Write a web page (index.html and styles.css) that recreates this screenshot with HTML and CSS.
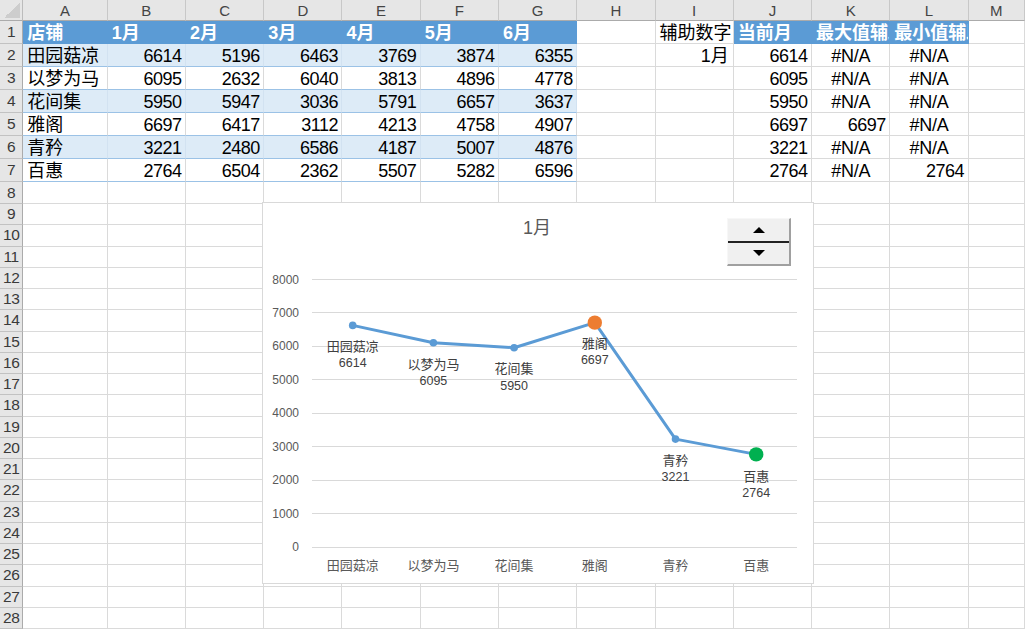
FILE: index.html
```html
<!DOCTYPE html>
<html lang="zh-CN">
<head>
<meta charset="utf-8">
<title>Sheet</title>
<link rel="stylesheet" href="styles.css">
</head>
<body>
<div class="sheet">
  <div class="row hdr">
    <div class="corner"></div>
    <div class="ch">A</div><div class="ch">B</div><div class="ch">C</div><div class="ch">D</div><div class="ch">E</div><div class="ch">F</div><div class="ch">G</div><div class="ch">H</div><div class="ch">I</div><div class="ch">J</div><div class="ch">K</div><div class="ch">L</div><div class="ch">M</div>
  </div>

  <div class="row tall">
    <div class="rh">1</div>
    <div class="c th">店铺</div><div class="c th">1月</div><div class="c th">2月</div><div class="c th">3月</div><div class="c th">4月</div><div class="c th">5月</div><div class="c th">6月</div>
    <div class="c"></div>
    <div class="c">辅助数字</div>
    <div class="c th">当前月</div><div class="c th">最大值辅助</div><div class="c th">最小值辅助</div>
    <div class="c"></div>
  </div>

  <div class="row tall band">
    <div class="rh">2</div>
    <div class="c tb">田园菇凉</div><div class="c tb n">6614</div><div class="c tb n">5196</div><div class="c tb n">6463</div><div class="c tb n">3769</div><div class="c tb n">3874</div><div class="c tb n">6355</div>
    <div class="c"></div><div class="c r">1月</div><div class="c n">6614</div><div class="c ctr">#N/A</div><div class="c ctr">#N/A</div><div class="c"></div>
  </div>

  <div class="row tall">
    <div class="rh">3</div>
    <div class="c tb">以梦为马</div><div class="c tb n">6095</div><div class="c tb n">2632</div><div class="c tb n">6040</div><div class="c tb n">3813</div><div class="c tb n">4896</div><div class="c tb n">4778</div>
    <div class="c"></div><div class="c"></div><div class="c n">6095</div><div class="c ctr">#N/A</div><div class="c ctr">#N/A</div><div class="c"></div>
  </div>

  <div class="row tall band">
    <div class="rh">4</div>
    <div class="c tb">花间集</div><div class="c tb n">5950</div><div class="c tb n">5947</div><div class="c tb n">3036</div><div class="c tb n">5791</div><div class="c tb n">6657</div><div class="c tb n">3637</div>
    <div class="c"></div><div class="c"></div><div class="c n">5950</div><div class="c ctr">#N/A</div><div class="c ctr">#N/A</div><div class="c"></div>
  </div>

  <div class="row tall">
    <div class="rh">5</div>
    <div class="c tb">雅阁</div><div class="c tb n">6697</div><div class="c tb n">6417</div><div class="c tb n">3112</div><div class="c tb n">4213</div><div class="c tb n">4758</div><div class="c tb n">4907</div>
    <div class="c"></div><div class="c"></div><div class="c n">6697</div><div class="c n">6697</div><div class="c ctr">#N/A</div><div class="c"></div>
  </div>

  <div class="row tall band">
    <div class="rh">6</div>
    <div class="c tb">青矜</div><div class="c tb n">3221</div><div class="c tb n">2480</div><div class="c tb n">6586</div><div class="c tb n">4187</div><div class="c tb n">5007</div><div class="c tb n">4876</div>
    <div class="c"></div><div class="c"></div><div class="c n">3221</div><div class="c ctr">#N/A</div><div class="c ctr">#N/A</div><div class="c"></div>
  </div>

  <div class="row tall">
    <div class="rh">7</div>
    <div class="c tb">百惠</div><div class="c tb n">2764</div><div class="c tb n">6504</div><div class="c tb n">2362</div><div class="c tb n">5507</div><div class="c tb n">5282</div><div class="c tb n">6596</div>
    <div class="c"></div><div class="c"></div><div class="c n">2764</div><div class="c ctr">#N/A</div><div class="c n">2764</div><div class="c"></div>
  </div>

  <div class="row r8"><div class="rh">8</div><div class="c"></div><div class="c"></div><div class="c"></div><div class="c"></div><div class="c"></div><div class="c"></div><div class="c"></div><div class="c"></div><div class="c"></div><div class="c"></div><div class="c"></div><div class="c"></div><div class="c"></div></div>
  <div class="row"><div class="rh">9</div><div class="c"></div><div class="c"></div><div class="c"></div><div class="c"></div><div class="c"></div><div class="c"></div><div class="c"></div><div class="c"></div><div class="c"></div><div class="c"></div><div class="c"></div><div class="c"></div><div class="c"></div></div>
  <div class="row"><div class="rh">10</div><div class="c"></div><div class="c"></div><div class="c"></div><div class="c"></div><div class="c"></div><div class="c"></div><div class="c"></div><div class="c"></div><div class="c"></div><div class="c"></div><div class="c"></div><div class="c"></div><div class="c"></div></div>
  <div class="row"><div class="rh">11</div><div class="c"></div><div class="c"></div><div class="c"></div><div class="c"></div><div class="c"></div><div class="c"></div><div class="c"></div><div class="c"></div><div class="c"></div><div class="c"></div><div class="c"></div><div class="c"></div><div class="c"></div></div>
  <div class="row"><div class="rh">12</div><div class="c"></div><div class="c"></div><div class="c"></div><div class="c"></div><div class="c"></div><div class="c"></div><div class="c"></div><div class="c"></div><div class="c"></div><div class="c"></div><div class="c"></div><div class="c"></div><div class="c"></div></div>
  <div class="row"><div class="rh">13</div><div class="c"></div><div class="c"></div><div class="c"></div><div class="c"></div><div class="c"></div><div class="c"></div><div class="c"></div><div class="c"></div><div class="c"></div><div class="c"></div><div class="c"></div><div class="c"></div><div class="c"></div></div>
  <div class="row"><div class="rh">14</div><div class="c"></div><div class="c"></div><div class="c"></div><div class="c"></div><div class="c"></div><div class="c"></div><div class="c"></div><div class="c"></div><div class="c"></div><div class="c"></div><div class="c"></div><div class="c"></div><div class="c"></div></div>
  <div class="row"><div class="rh">15</div><div class="c"></div><div class="c"></div><div class="c"></div><div class="c"></div><div class="c"></div><div class="c"></div><div class="c"></div><div class="c"></div><div class="c"></div><div class="c"></div><div class="c"></div><div class="c"></div><div class="c"></div></div>
  <div class="row"><div class="rh">16</div><div class="c"></div><div class="c"></div><div class="c"></div><div class="c"></div><div class="c"></div><div class="c"></div><div class="c"></div><div class="c"></div><div class="c"></div><div class="c"></div><div class="c"></div><div class="c"></div><div class="c"></div></div>
  <div class="row"><div class="rh">17</div><div class="c"></div><div class="c"></div><div class="c"></div><div class="c"></div><div class="c"></div><div class="c"></div><div class="c"></div><div class="c"></div><div class="c"></div><div class="c"></div><div class="c"></div><div class="c"></div><div class="c"></div></div>
  <div class="row"><div class="rh">18</div><div class="c"></div><div class="c"></div><div class="c"></div><div class="c"></div><div class="c"></div><div class="c"></div><div class="c"></div><div class="c"></div><div class="c"></div><div class="c"></div><div class="c"></div><div class="c"></div><div class="c"></div></div>
  <div class="row"><div class="rh">19</div><div class="c"></div><div class="c"></div><div class="c"></div><div class="c"></div><div class="c"></div><div class="c"></div><div class="c"></div><div class="c"></div><div class="c"></div><div class="c"></div><div class="c"></div><div class="c"></div><div class="c"></div></div>
  <div class="row"><div class="rh">20</div><div class="c"></div><div class="c"></div><div class="c"></div><div class="c"></div><div class="c"></div><div class="c"></div><div class="c"></div><div class="c"></div><div class="c"></div><div class="c"></div><div class="c"></div><div class="c"></div><div class="c"></div></div>
  <div class="row"><div class="rh">21</div><div class="c"></div><div class="c"></div><div class="c"></div><div class="c"></div><div class="c"></div><div class="c"></div><div class="c"></div><div class="c"></div><div class="c"></div><div class="c"></div><div class="c"></div><div class="c"></div><div class="c"></div></div>
  <div class="row"><div class="rh">22</div><div class="c"></div><div class="c"></div><div class="c"></div><div class="c"></div><div class="c"></div><div class="c"></div><div class="c"></div><div class="c"></div><div class="c"></div><div class="c"></div><div class="c"></div><div class="c"></div><div class="c"></div></div>
  <div class="row"><div class="rh">23</div><div class="c"></div><div class="c"></div><div class="c"></div><div class="c"></div><div class="c"></div><div class="c"></div><div class="c"></div><div class="c"></div><div class="c"></div><div class="c"></div><div class="c"></div><div class="c"></div><div class="c"></div></div>
  <div class="row"><div class="rh">24</div><div class="c"></div><div class="c"></div><div class="c"></div><div class="c"></div><div class="c"></div><div class="c"></div><div class="c"></div><div class="c"></div><div class="c"></div><div class="c"></div><div class="c"></div><div class="c"></div><div class="c"></div></div>
  <div class="row"><div class="rh">25</div><div class="c"></div><div class="c"></div><div class="c"></div><div class="c"></div><div class="c"></div><div class="c"></div><div class="c"></div><div class="c"></div><div class="c"></div><div class="c"></div><div class="c"></div><div class="c"></div><div class="c"></div></div>
  <div class="row"><div class="rh">26</div><div class="c"></div><div class="c"></div><div class="c"></div><div class="c"></div><div class="c"></div><div class="c"></div><div class="c"></div><div class="c"></div><div class="c"></div><div class="c"></div><div class="c"></div><div class="c"></div><div class="c"></div></div>
  <div class="row"><div class="rh">27</div><div class="c"></div><div class="c"></div><div class="c"></div><div class="c"></div><div class="c"></div><div class="c"></div><div class="c"></div><div class="c"></div><div class="c"></div><div class="c"></div><div class="c"></div><div class="c"></div><div class="c"></div></div>
  <div class="row"><div class="rh">28</div><div class="c"></div><div class="c"></div><div class="c"></div><div class="c"></div><div class="c"></div><div class="c"></div><div class="c"></div><div class="c"></div><div class="c"></div><div class="c"></div><div class="c"></div><div class="c"></div><div class="c"></div></div>

  <div class="chart">
    <svg class="plot" width="550" height="380" viewBox="0 0 550 380" xmlns="http://www.w3.org/2000/svg">
      <text class="title" x="274" y="25">1月</text>
      <g class="grid">
        <line x1="49" y1="76.5" x2="534" y2="76.5"/>
        <line x1="49" y1="109.5" x2="534" y2="109.5"/>
        <line x1="49" y1="143.5" x2="534" y2="143.5"/>
        <line x1="49" y1="176.5" x2="534" y2="176.5"/>
        <line x1="49" y1="210.5" x2="534" y2="210.5"/>
        <line x1="49" y1="243.5" x2="534" y2="243.5"/>
        <line x1="49" y1="277.5" x2="534" y2="277.5"/>
        <line x1="49" y1="310.5" x2="534" y2="310.5"/>
        <line x1="49" y1="344.5" x2="534" y2="344.5"/>
      </g>
      <g class="yax">
        <text x="36" y="76.5">8000</text>
        <text x="36" y="109.5">7000</text>
        <text x="36" y="143">6000</text>
        <text x="36" y="176.5">5000</text>
        <text x="36" y="210">4000</text>
        <text x="36" y="243.5">3000</text>
        <text x="36" y="277">2000</text>
        <text x="36" y="310.5">1000</text>
        <text x="36" y="344">0</text>
      </g>
      <g class="xax">
        <text x="89.7" y="361.5">田园菇凉</text>
        <text x="170.4" y="361.5">以梦为马</text>
        <text x="251.1" y="361.5">花间集</text>
        <text x="331.8" y="361.5">雅阁</text>
        <text x="412.5" y="361.5">青矜</text>
        <text x="493.2" y="361.5">百惠</text>
      </g>
      <polyline class="series" points="89.7,122.4 170.4,139.8 251.1,144.7 331.8,119.65 412.5,236.1 493.2,251.4"/>
      <g class="mk">
        <circle cx="89.7" cy="122.4" r="3.8"/>
        <circle cx="170.4" cy="139.8" r="3.8"/>
        <circle cx="251.1" cy="144.7" r="3.8"/>
        <circle cx="412.5" cy="236.1" r="3.8"/>
      </g>
      <circle class="max" cx="331.8" cy="119.65" r="7.2"/>
      <circle class="min" cx="493.2" cy="251.4" r="7.2"/>
      <g class="lbl">
        <text x="89.7" y="142.6">田园菇凉</text><text class="v" x="89.7" y="160.3">6614</text>
        <text x="170.4" y="160">以梦为马</text><text class="v" x="170.4" y="177.7">6095</text>
        <text x="251.1" y="164.9">花间集</text><text class="v" x="251.1" y="182.6">5950</text>
        <text x="331.8" y="139.2">雅阁</text><text class="v" x="331.8" y="157.3">6697</text>
        <text x="412.5" y="256.3">青矜</text><text class="v" x="412.5" y="274">3221</text>
        <text x="493.2" y="272.2">百惠</text><text class="v" x="493.2" y="289.5">2764</text>
      </g>
    </svg>
    <div class="spin">
      <div class="half up"></div>
      <div class="half down"></div>
    </div>
  </div>
</div>
</body>
</html>
```

FILE: styles.css
```css
html, body {
  margin: 0;
  padding: 0;
  background: #ffffff;
  overflow: hidden;
}

.sheet {
  position: relative;
  width: 1025px;
  height: 629px;
  overflow: hidden;
  font-family: "Liberation Sans", "Noto Sans CJK SC", sans-serif;
  color: #000;
}

.row {
  display: grid;
  grid-template-columns: 23.3px 84.4px repeat(11, 78.27px) 1fr;
  height: 21.25px;
}
.row.hdr { height: 21px; }
.row.tall { height: 23px; }
.row.r8 { height: 22px; }

/* column header */
.corner {
  background: #e6e6e6 linear-gradient(to bottom right, transparent 50%, #cdcdcd 50%) no-repeat right 2px bottom 2px / 16px 16px;
  border-right: 1px solid #bcbcbc;
  border-bottom: 1px solid #ababab;
  box-sizing: border-box;
}
.ch {
  background: #e6e6e6;
  border-right: 1px solid #c8c8c8;
  border-bottom: 1px solid #ababab;
  box-sizing: border-box;
  font-size: 15px;
  color: #444;
  display: flex;
  align-items: center;
  justify-content: center;
  padding-top: 1px;
}

/* row header */
.rh {
  background: #e6e6e6;
  border-right: 1px solid #ababab;
  border-bottom: 1px solid #c2c2c2;
  box-sizing: border-box;
  font-size: 15.5px;
  color: #3a3a3a;
  display: flex;
  align-items: center;
  justify-content: center;
  letter-spacing: -0.4px;
  overflow: hidden;
  white-space: nowrap;
}

/* cells */
.c {
  border-right: 1px solid #dadada;
  border-bottom: 1px solid #dadada;
  box-sizing: border-box;
  font-size: 18px;
  line-height: 20px;
  padding: 0 4px 0 4px;
  display: flex;
  align-items: flex-end;
  white-space: nowrap;
  overflow: hidden;
  min-width: 0;
}
.c.n { justify-content: flex-end; letter-spacing: -0.5px; padding-right: 3.5px; }
.c.r { justify-content: flex-end; padding-right: 4px; }
.c.ctr { justify-content: center; letter-spacing: -0.3px; }

.c.th {
  background: #5b9bd5;
  color: #fff;
  font-weight: bold;
  border-right-color: #5b9bd5;
  border-bottom-color: #5b9bd5;
}
.c.tb { border-bottom-color: #9bc2e6; }
.band .c.tb {
  background: #ddebf7;
  border-right-color: #d2e2f1;
}

/* chart */
.chart {
  position: absolute;
  left: 262px;
  top: 202px;
  width: 552px;
  height: 382px;
  box-sizing: border-box;
  border: 1px solid #d9d9d9;
  background: #fff;
}
.plot { display: block; }
.plot text { dominant-baseline: central; }
.title {
  font-family: "Liberation Sans", "Noto Sans CJK SC", sans-serif;
  font-size: 18px;
  fill: #595959;
  text-anchor: middle;
}
.grid line { stroke: #d9d9d9; stroke-width: 1; }
.yax text {
  font-family: "Liberation Sans", sans-serif;
  font-size: 12px;
  fill: #595959;
  text-anchor: end;
}
.xax text {
  font-family: "Noto Sans CJK SC", sans-serif;
  font-size: 13px;
  fill: #595959;
  text-anchor: middle;
}
.series {
  fill: none;
  stroke: #5b9bd5;
  stroke-width: 3;
  stroke-linejoin: round;
  stroke-linecap: round;
}
.mk circle { fill: #5b9bd5; }
.max { fill: #ed7d31; }
.min { fill: #00b050; }
.lbl text {
  font-family: "Noto Sans CJK SC", sans-serif;
  font-size: 13px;
  fill: #404040;
  text-anchor: middle;
}
.lbl text.v {
  font-family: "Liberation Sans", sans-serif;
  font-size: 12.5px;
}

/* spin button */
.spin {
  position: absolute;
  left: 464px;
  top: 15px;
  width: 64px;
  height: 48px;
  box-sizing: border-box;
  background: #f0f0f0;
  border-top: 1px solid #f7f7f7;
  border-left: 1px solid #f7f7f7;
  border-right: 2px solid #a0a0a0;
  border-bottom: 2px solid #a0a0a0;
  display: flex;
  flex-direction: column;
}
.half {
  flex: 1;
  display: flex;
  align-items: center;
  justify-content: center;
}
.half + .half { border-top: 2px solid #222; }
.up::before {
  content: "";
  border-left: 6px solid transparent;
  border-right: 6px solid transparent;
  border-bottom: 6px solid #000;
}
.down::before {
  content: "";
  border-left: 6px solid transparent;
  border-right: 6px solid transparent;
  border-top: 6px solid #000;
}
```
